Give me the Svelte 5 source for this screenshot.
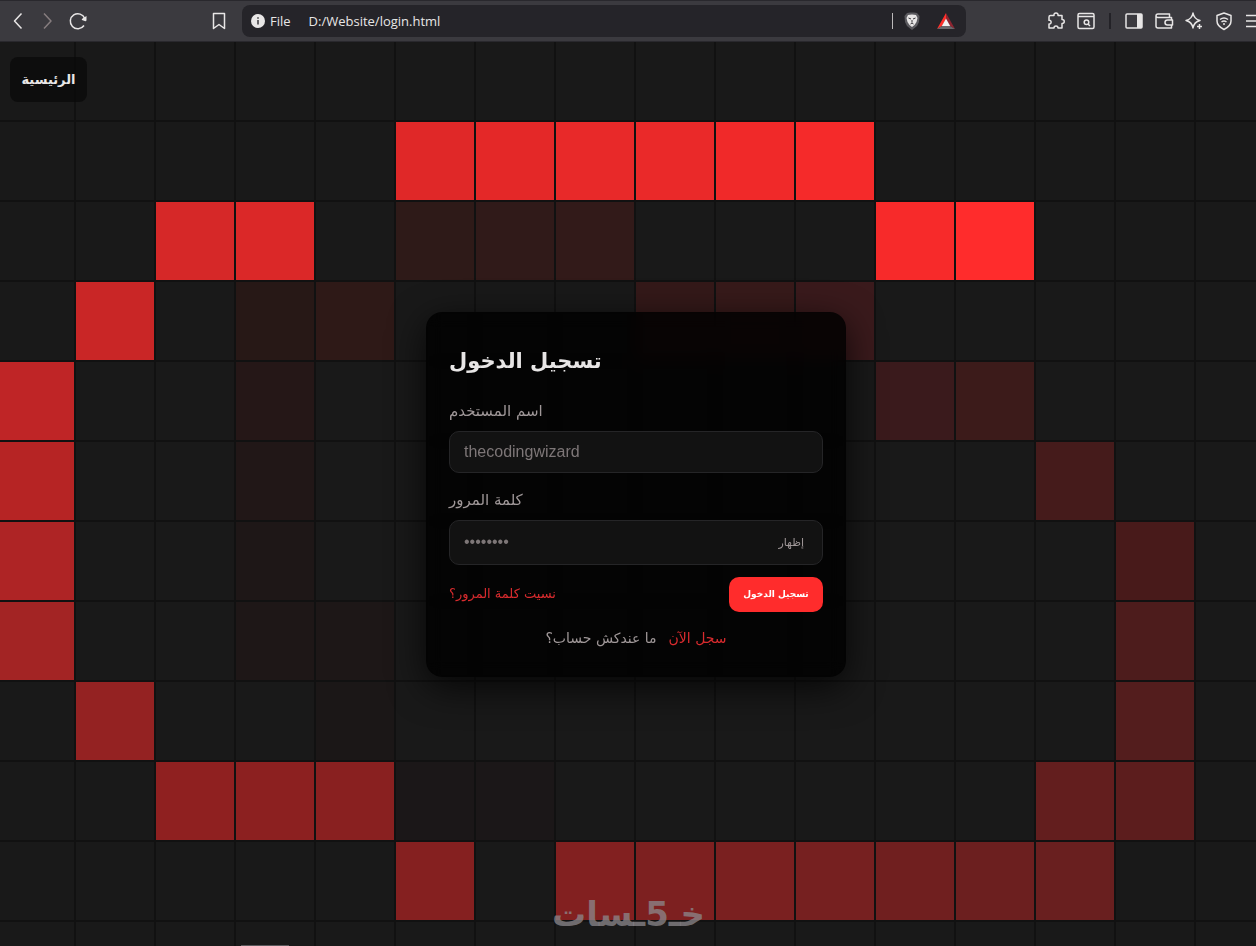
<script>
    const COLS = 16
    const ROWS = 12

    // lit tiles, keyed by row then column
    const trail = {
        1: { 5: '#e02828', 6: '#e42828', 7: '#e82929', 8: '#ea2929', 9: '#f02929', 10: '#f52a2a' },
        2: { 2: '#d62828', 3: '#db2828', 5: '#2e1a18', 6: '#301a19', 7: '#321a19', 11: '#f72a2a', 12: '#ff2c2c' },
        3: { 1: '#c92626', 3: '#271816', 4: '#2e1917', 8: '#341919', 9: '#371a1a', 10: '#3a1a1c' },
        4: { 0: '#bf2526', 3: '#251717', 11: '#3a1a1c', 12: '#3c1b1a' },
        5: { 0: '#b62424', 3: '#211717', 13: '#451b1b' },
        6: { 0: '#ae2425', 3: '#1e1717', 14: '#481a1a' },
        7: { 0: '#a32424', 3: '#1e1717', 4: '#1d1717', 14: '#4d1c1c' },
        8: { 1: '#942222', 4: '#1b1717', 14: '#531d1d' },
        9: { 2: '#8f2020', 3: '#8c2020', 4: '#892020', 5: '#1b1718', 6: '#1b1718', 13: '#631e1e', 14: '#5c1d1d' },
        10: { 5: '#852020', 7: '#822020', 8: '#7d2020', 9: '#7a2020', 10: '#762020', 11: '#701f1f', 12: '#6c1f1f', 13: '#691f1f' }
    }

    const tiles = []
    for (let r = 0; r < ROWS; r++) {
        for (let c = 0; c < COLS; c++) {
            tiles.push((trail[r] && trail[r][c]) || '#191919')
        }
    }

    let username = ''
    let password = ''
    let shown = false
</script>

<svelte:head>
    <title>login</title>
</svelte:head>

<div class="window">
    <header class="toolbar">
        <nav class="nav">
            <button class="tool" aria-label="Back">
                <svg width="20" height="20" viewBox="0 0 20 20"><path d="M13.500 2.5 6.500 10l7 7.5" /></svg>
            </button>
            <button class="tool dim" aria-label="Forward">
                <svg width="20" height="20" viewBox="0 0 20 20"><path d="m6 2.5 7 7.5-7 7.5" /></svg>
            </button>
            <button class="tool" aria-label="Reload">
                <svg width="20" height="20" viewBox="0 0 20 20"><path d="M16 14.500A7.500 7.500 0 1 1 16.800 7.500" /><path class="solid" d="M18.500 5v4q0 1.200-1.200 1.200L14 9q-.800-1 .500-1.500z" /></svg>
            </button>
            <button class="tool bookmark" aria-label="Bookmark">
                <svg width="20" height="20" viewBox="0 0 20 20"><path d="M4.500 2.500h11v15L10 13.500l-5.500 4z" /></svg>
            </button>
        </nav>

        <div class="address">
            <svg width="14" height="14" viewBox="0 0 14 14"><circle class="solid" cx="7" cy="7" r="7" /><path class="cut" d="M7 6v4.500M7 3.200v1.600" /></svg>
            <span class="scheme">File</span>
            <span class="url">D:/Website/login.html</span>
            <i class="rule"></i>
            <button class="tool" aria-label="Shields">
                <svg width="20" height="20" viewBox="0 0 20 20">
                    <path class="mane" d="m5 2 3-.500h4l3 .500 2.500 3-.500 6-2 4-5 4-5-4-2-4L2.500 5z" />
                    <path class="solid" d="m6 4 4-.500 4 .500 1.500 3-1 4-2 3-2.500 2-2.500-2-2-3-1-4z" />
                    <path class="cut thin" d="m6.500 7 2.500 1M13.500 7 11 8M10 9v2.500M8.500 13l1.500-1 1.500 1" />
                </svg>
            </button>
            <button class="tool" aria-label="Rewards">
                <svg width="20" height="18" viewBox="0 0 20 18">
                    <path fill="#ff2f2a" stroke="none" d="M10 1 1 17l5-3 4-7z" />
                    <path fill="#8e2430" stroke="none" d="m10 1 9 16-5-3-4-7z" />
                    <path fill="#6a686c" stroke="none" d="m1 17 5-3h8l5 3z" />
                    <path fill="#f3f0f0" stroke="none" d="m10 6.500 4.200 7.500H5.800z" />
                </svg>
            </button>
        </div>

        <div class="tools">
            <button class="tool" aria-label="Extensions">
                <svg width="20" height="20" viewBox="0 0 20 20"><path d="M4.500 4.500H8c-.600-3.500 4.600-3.500 4 0h4v4c3 0 3 4 0 4v4.500h-4c0-2.600-4-2.600-4 0H3v-4c2.800.300 2.800-4 0-3.700V6q0-1.500 1.500-1.500z" /></svg>
            </button>
            <button class="tool" aria-label="Search tabs">
                <svg width="20" height="20" viewBox="0 0 20 20"><rect x="2" y="2.500" width="16" height="15" rx="1.500" /><path d="M2 5.500h16M12 13l2 2" /><circle cx="10.500" cy="11.300" r="2.300" /></svg>
            </button>
            <i class="split"></i>
            <button class="tool" aria-label="Sidebar">
                <svg width="20" height="20" viewBox="0 0 20 20"><rect x="2" y="3" width="16" height="14" rx="1" /><path class="solid" d="M13 3h5v14h-5z" /></svg>
            </button>
            <button class="tool" aria-label="Wallet">
                <svg width="20" height="20" viewBox="0 0 20 20"><path d="M15.500 6V3H4Q2 3 2 5v10q0 2 2 2h13.500v-3M2 5q0 1.500 2 1.500h13.500V9" /><path d="M18.500 9h-5a2.500 2.500 0 0 0 0 5h5z" /></svg>
            </button>
            <button class="tool" aria-label="Assistant">
                <svg width="20" height="20" viewBox="0 0 20 20"><path d="M9 2q1 6 7 7.500-6 1.500-7 7.500-1-6-7-7.500Q8 8 9 2zM15.500 13v5M13 15.500h5" /></svg>
            </button>
            <button class="tool" aria-label="VPN">
                <svg width="20" height="20" viewBox="0 0 20 20"><path d="m10 2 7 2.500v5.500q0 5-7 8.500-7-3.500-7-8.500V4.500z" /><path d="M6 8.500q4-3 8 0M7.500 11q2.500-2 5 0" /><circle class="solid" cx="10" cy="13" r="1" /></svg>
            </button>
            <button class="tool" aria-label="Menu">
                <svg width="20" height="20" viewBox="0 0 20 20"><path d="M2 4.500h18M2 10h18M2 15.500h18" /></svg>
            </button>
        </div>
    </header>

    <main class="stage">
        <div class="tiles" aria-hidden="true">
            {#each tiles as color}
                <span class="tile" style="background-color:{color}"></span>
            {/each}
        </div>

        <a class="home" href="#home">الرئيسية</a>

        <form class="card" on:submit|preventDefault>
            <h1 class="card-title">تسجيل الدخول</h1>

            <label for="username">اسم المستخدم</label>
            <div class="field">
                <input id="username" type="text" placeholder="thecodingwizard" bind:value={username} />
            </div>

            <label for="password">كلمة المرور</label>
            <div class="field field-password">
                {#if shown}
                    <input id="password" type="text" placeholder="••••••••" bind:value={password} />
                {:else}
                    <input id="password" type="password" placeholder="••••••••" bind:value={password} />
                {/if}
                <button type="button" class="show" on:click={() => shown = !shown}>إظهار</button>
            </div>

            <div class="actions">
                <a class="link forgot" href="#forgot">نسيت كلمة المرور؟</a>
                <button type="submit" class="submit">تسجيل الدخول</button>
            </div>

            <p class="signup">
                <span>ما عندكش حساب؟</span>
                <a class="link" href="#signup">سجل الآن</a>
            </p>
        </form>

        <div class="watermark" dir="rtl">خـ5ـسات</div>
        <i class="edge"></i>
    </main>
</div>

<style>
    :global(body){
        margin:0;
        background-color:#111;
    }
    .window{
        display:flex;
        flex-direction:column;
        height:100vh;
        overflow:hidden;
        font-family:"DejaVu Sans", sans-serif;
        color:#e8e6e6;
    }
    button{
        padding:0;
        border:0;
        background-color:transparent;
        color:inherit;
        cursor:pointer;
    }
    a{
        text-decoration:none;
    }

    .toolbar{
        display:flex;
        align-items:center;
        flex-shrink:0;
        box-sizing:border-box;
        height:42px;
        border-top:1px solid #29282d;
        border-bottom:1px solid #29282d;
        background-color:#3b3a3f;
    }
    .nav{
        display:flex;
        flex-shrink:0;
        box-sizing:border-box;
        width:242px;
        padding:0 8px 0 3px;
    }
    .tool{
        display:flex;
        flex-shrink:0;
        align-items:center;
        justify-content:center;
        width:30px;
        height:30px;
    }
    .tool.dim{
        color:#867d7f;
    }
    .bookmark{
        margin-left:auto;
    }
    svg{
        flex-shrink:0;
        fill:none;
        stroke:currentColor;
        stroke-width:1.5;
        stroke-linejoin:round;
    }
    .solid{
        fill:currentColor;
        stroke:none;
    }
    .cut{
        stroke:#38373b;
    }
    .thin{
        stroke-width:1;
    }
    .mane{
        fill:#5b5a5f;
        stroke:none;
    }
    .address{
        display:flex;
        flex:1;
        align-items:center;
        box-sizing:border-box;
        height:32px;
        padding:0 5px 0 9px;
        border-radius:8px;
        background-color:#252429;
        font-family:"Open Sans", sans-serif;
        font-size:13px;
    }
    .scheme{
        margin:0 18px 0 5px;
    }
    .url{
        flex:1;
    }
    .rule{
        width:1px;
        height:16px;
        margin-right:4px;
        background-color:#bcb9ba;
    }
    .address .tool + .tool{
        margin-left:4px;
    }
    .tools{
        display:flex;
        flex-shrink:0;
        align-items:center;
        box-sizing:border-box;
        width:290px;
        padding-left:75px;
        overflow:hidden;
    }
    .split{
        flex-shrink:0;
        width:2px;
        height:16px;
        margin:0 8px;
        background-color:#232227;
    }

    .stage{
        position:relative;
        display:flex;
        flex:1;
        align-items:center;
        justify-content:center;
        padding-left:16px;
        overflow:hidden;
    }
    .tiles{
        position:absolute;
        top:0;
        left:0;
        display:grid;
        grid-template-columns:74px repeat(15, 78px);
        grid-auto-rows:78px;
        gap:2px;
    }
    .home{
        position:absolute;
        top:15px;
        left:10px;
        box-sizing:border-box;
        width:77px;
        border-radius:8px;
        background-color:rgba(10, 10, 10, 0.8);
        color:#e8e6e6;
        font-size:13px;
        font-weight:700;
        line-height:45px;
        text-align:center;
        white-space:nowrap;
    }
    .card{
        position:relative;
        box-sizing:border-box;
        width:420px;
        padding:32px 22px 26px;
        border:1px solid rgba(0, 0, 0, 0.1);
        border-radius:16px;
        background-color:rgba(0, 0, 0, 0.84);
        box-shadow:0 10px 36px rgba(0, 0, 0, 0.75);
        backdrop-filter:blur(8px);
    }
    .card-title{
        margin:0 0 22px;
        font-size:21px;
        line-height:32px;
        font-weight:700;
    }
    label{
        display:block;
        margin-bottom:8px;
        color:#a09899;
        font-size:15px;
        line-height:24px;
    }
    .field{
        display:flex;
        align-items:center;
        box-sizing:border-box;
        height:42px;
        margin-bottom:15px;
        padding:0 14px;
        border:1px solid #252527;
        border-radius:10px;
        background-color:#121212;
    }
    .field-password{
        height:45px;
        margin-bottom:12px;
    }
    input{
        flex:1;
        min-width:0;
        padding:0;
        border:0;
        outline:0;
        background-color:transparent;
        color:#e8e6e6;
        font-family:"Liberation Sans", sans-serif;
        font-size:16px;
    }
    input::placeholder{
        color:#7d7677;
    }
    .show{
        padding:0 4px;
        color:#a09899;
        font-family:"DejaVu Sans", sans-serif;
        font-size:11px;
    }
    .actions{
        display:flex;
        align-items:center;
        justify-content:space-between;
    }
    .link{
        color:#d92b2e;
        font-size:14px;
        line-height:24px;
    }
    .forgot{
        font-size:13px;
    }
    .submit{
        width:94px;
        height:35px;
        border-radius:10px;
        background-color:#ff2c2c;
        color:#fff;
        font-family:"DejaVu Sans", sans-serif;
        font-size:9px;
        font-weight:700;
    }
    .signup{
        display:flex;
        justify-content:center;
        gap:12px;
        margin:14px 0 0;
        color:#a09899;
        font-size:14px;
        line-height:24px;
    }
    .watermark{
        position:absolute;
        bottom:8px;
        left:552px;
        color:rgba(140, 136, 140, 0.75);
        font-size:34px;
        font-weight:700;
        line-height:48px;
    }
    .edge{
        position:absolute;
        bottom:0;
        left:241px;
        width:48px;
        height:1px;
        background-color:#5a595c;
    }
</style>
